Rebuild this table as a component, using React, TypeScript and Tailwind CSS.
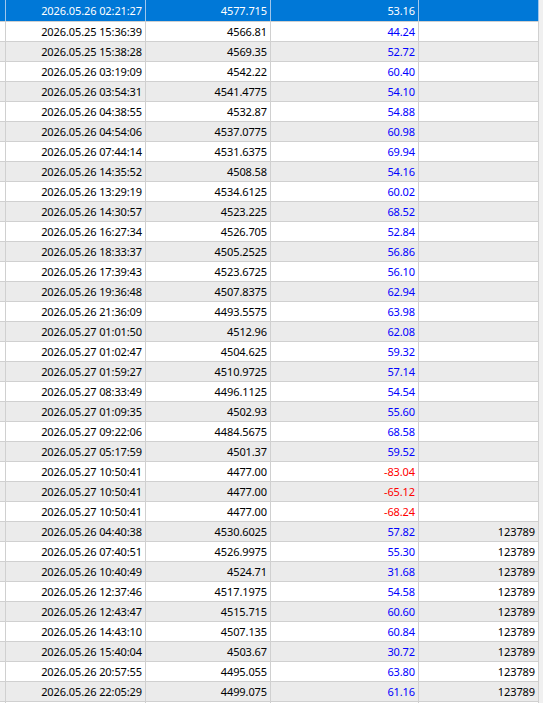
import React from "react";

type Row = [string, string, string, string];

const rows: Row[] = [
  ["2026.05.26 02:21:27", "4577.715", "53.16", ""],
  ["2026.05.25 15:36:39", "4566.81", "44.24", ""],
  ["2026.05.25 15:38:28", "4569.35", "52.72", ""],
  ["2026.05.26 03:19:09", "4542.22", "60.40", ""],
  ["2026.05.26 03:54:31", "4541.4775", "54.10", ""],
  ["2026.05.26 04:38:55", "4532.87", "54.88", ""],
  ["2026.05.26 04:54:06", "4537.0775", "60.98", ""],
  ["2026.05.26 07:44:14", "4531.6375", "69.94", ""],
  ["2026.05.26 14:35:52", "4508.58", "54.16", ""],
  ["2026.05.26 13:29:19", "4534.6125", "60.02", ""],
  ["2026.05.26 14:30:57", "4523.225", "68.52", ""],
  ["2026.05.26 16:27:34", "4526.705", "52.84", ""],
  ["2026.05.26 18:33:37", "4505.2525", "56.86", ""],
  ["2026.05.26 17:39:43", "4523.6725", "56.10", ""],
  ["2026.05.26 19:36:48", "4507.8375", "62.94", ""],
  ["2026.05.26 21:36:09", "4493.5575", "63.98", ""],
  ["2026.05.27 01:01:50", "4512.96", "62.08", ""],
  ["2026.05.27 01:02:47", "4504.625", "59.32", ""],
  ["2026.05.27 01:59:27", "4510.9725", "57.14", ""],
  ["2026.05.27 08:33:49", "4496.1125", "54.54", ""],
  ["2026.05.27 01:09:35", "4502.93", "55.60", ""],
  ["2026.05.27 09:22:06", "4484.5675", "68.58", ""],
  ["2026.05.27 05:17:59", "4501.37", "59.52", ""],
  ["2026.05.27 10:50:41", "4477.00", "-83.04", ""],
  ["2026.05.27 10:50:41", "4477.00", "-65.12", ""],
  ["2026.05.27 10:50:41", "4477.00", "-68.24", ""],
  ["2026.05.26 04:40:38", "4530.6025", "57.82", "123789"],
  ["2026.05.26 07:40:51", "4526.9975", "55.30", "123789"],
  ["2026.05.26 10:40:49", "4524.71", "31.68", "123789"],
  ["2026.05.26 12:37:46", "4517.1975", "54.58", "123789"],
  ["2026.05.26 12:43:47", "4515.715", "60.60", "123789"],
  ["2026.05.26 14:43:10", "4507.135", "60.84", "123789"],
  ["2026.05.26 15:40:04", "4503.67", "30.72", "123789"],
  ["2026.05.26 20:57:55", "4495.055", "63.80", "123789"],
  ["2026.05.26 22:05:29", "4499.075", "61.16", "123789"],
  ["", "", "", ""],
];

export default function App() {
  return (
    <div
      className="w-[543px] h-[703px] overflow-hidden bg-white flex"
      style={{ fontFamily: '"Noto Sans", "Open Sans", sans-serif' }}
    >
      <div className="w-[539px] flex flex-col text-[11px] tracking-[-0.1px] leading-none">
        {rows.map((r, i) => {
          const selected = i === 0;
          const bg = selected ? "bg-[#0078d7]" : i % 2 === 0 ? "bg-[#ebebeb]" : "bg-white";
          const line = selected ? "border-[#9fc6ec]" : "border-[#d0d0d0]";
          const neg = r[2].startsWith("-");
          const valColor = selected ? "text-white" : neg ? "text-[#ff0000]" : "text-[#0000ff]";
          const txt = selected ? "text-white" : "text-black";
          const h = i === 0 ? "h-[22px]" : "h-[20px]";
          return (
            <div key={i} className={`flex shrink-0 ${h} border-b border-[#d0d0d0] ${bg}`}>
              <div className={`w-[6px] shrink-0 border-r ${line}`} />
              <div className={`w-[140px] shrink-0 border-r ${line} flex items-center justify-end pr-[3px] ${txt}`}>
                {r[0]}
              </div>
              <div className={`w-[125px] shrink-0 border-r ${line} flex items-center justify-end pr-[3px] ${txt}`}>
                {r[1]}
              </div>
              <div className={`w-[148px] shrink-0 border-r ${line} flex items-center justify-end pr-[3px] ${valColor}`}>
                {r[2]}
              </div>
              <div className={`w-[120px] shrink-0 border-r ${line} flex items-center justify-end pr-[3px] ${txt}`}>
                {r[3]}
              </div>
            </div>
          );
        })}
      </div>
      <div className="w-[4px] bg-[#f0f0f0]" />
    </div>
  );
}
